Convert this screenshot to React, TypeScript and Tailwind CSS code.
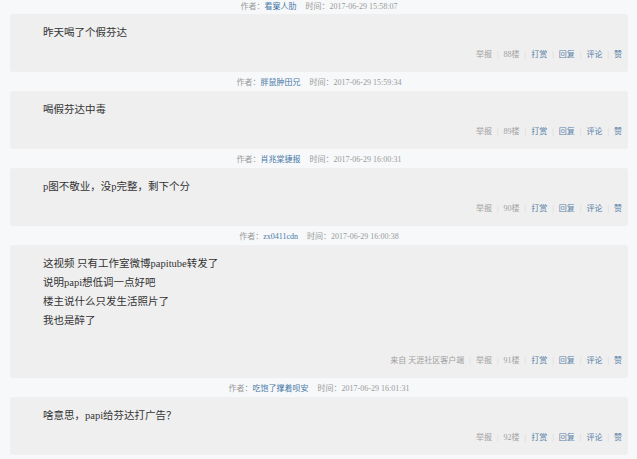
const posts = [
  {
    author: "看窠人肋",
    time: "2017-06-29 15:58:07",
    floor: "88楼",
    lines: ["昨天喝了个假芬达"],
  },
  {
    author: "胖鼠肿田兄",
    time: "2017-06-29 15:59:34",
    floor: "89楼",
    lines: ["喝假芬达中毒"],
  },
  {
    author: "肖兆棠捷报",
    time: "2017-06-29 16:00:31",
    floor: "90楼",
    lines: ["p图不敬业，没p完整，剩下个分"],
  },
  {
    author: "zx0411cdn",
    time: "2017-06-29 16:00:38",
    floor: "91楼",
    lines: ["这视频 只有工作室微博papitube转发了", "说明papi想低调一点好吧", "楼主说什么只发生活照片了", "我也是醉了"],
    extraLine: true,
    from: "来自 天涯社区客户端",
  },
  {
    author: "吃饱了撑着呗安",
    time: "2017-06-29 16:01:31",
    floor: "92楼",
    lines: ["啥意思，papi给芬达打广告？"],
  },
];

const Sep = () => <span className="mx-[5px] text-[#d4d4d4]">|</span>;

const App = () => {
  return (
    <div
      className="min-h-[459px] bg-[#f6f8f9] pl-[10px] pr-[9px]"
      style={{ fontFamily: '"Liberation Serif", "Noto Sans CJK SC", serif' }}
    >
      {posts.map((post, i) => (
        <div key={post.time}>
          {/* 作者 / 时间 */}
          <div
            className={`flex justify-center text-[8px] leading-[14px] text-[#9a9a9a] ${
              i === 0 ? "h-[14px]" : "h-[19px] pt-[4px]"
            }`}
          >
            <span>作者：</span>
            <span className="text-[#4a78a8]">{post.author}</span>
            <span className="ml-[9px]">时间：{post.time}</span>
          </div>

          {/* Post body */}
          <div className="rounded-[3px] bg-[#efefef] pt-[9px] pb-[10px] pl-[33px] pr-[6px]">
            <div className="text-[10.5px] leading-[19px] text-[#333333]">
              {post.lines.map((line) => (
                <div key={line}>{line}</div>
              ))}
              {post.extraLine && <div className="h-[18px]" />}
            </div>

            <div className="mt-[6px] flex h-[14px] items-center justify-end text-[8px] text-[#a0a0a0]">
              {post.from && (
                <>
                  <span>{post.from}</span>
                  <Sep />
                </>
              )}
              <span>举报</span>
              <Sep />
              <span>{post.floor}</span>
              <Sep />
              <span className="text-[#5a7fa8]">打赏</span>
              <Sep />
              <span className="text-[#5a7fa8]">回复</span>
              <Sep />
              <span className="text-[#5a7fa8]">评论</span>
              <Sep />
              <span className="text-[#5a7fa8]">赞</span>
            </div>
          </div>
        </div>
      ))}
    </div>
  );
};

export default App;
